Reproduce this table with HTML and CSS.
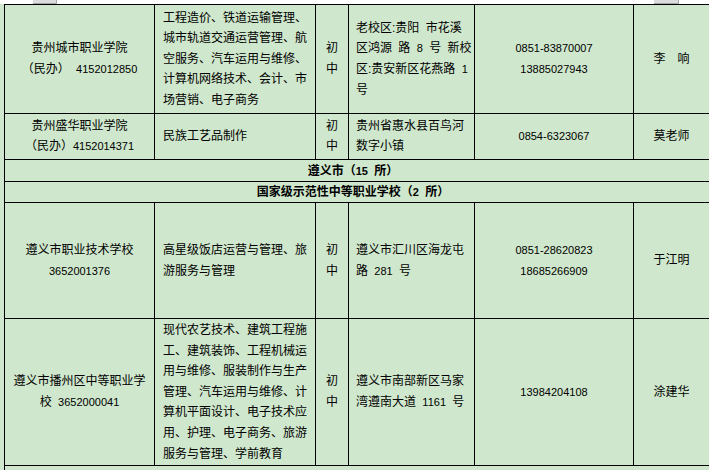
FILE: index.html
```html
<!DOCTYPE html>
<html lang="zh-CN">
<head>
<meta charset="utf-8">
<title>贵州省中等职业学校名录</title>
<link rel="stylesheet" href="styles.css">
</head>
<body>
<div class="ruler"><span class="tab tab-a"></span><span class="tab tab-b"></span></div>
<table class="sheet">
  <colgroup>
    <col class="c1"><col class="c2"><col class="c3"><col class="c4"><col class="c5"><col class="c6">
  </colgroup>
  <tbody>
    <tr class="r1">
      <td class="name">贵州城市职业学院<br>（民办） <span class="n">4152012850</span></td>
      <td class="major">工程造价、铁道运输管理、城市轨道交通运营管理、航空服务、汽车运用与维修、计算机网络技术、会计、市场营销、电子商务</td>
      <td class="level">初中</td>
      <td class="addr">老校区:贵阳 市花溪<br>区鸿源 路 <span class="n">8</span> 号 新校<br>区:贵安新区花燕路 <span class="n">1</span><br>号</td>
      <td class="phone"><span class="n">0851-83870007</span><br><span class="n">13885027943</span></td>
      <td class="contact">李　响</td>
    </tr>
    <tr class="r2">
      <td class="name">贵州盛华职业学院<br>（民办）<span class="n">4152014371</span></td>
      <td class="major">民族工艺品制作</td>
      <td class="level">初中</td>
      <td class="addr">贵州省惠水县百鸟河<br>数字小镇</td>
      <td class="phone"><span class="n">0854-6323067</span></td>
      <td class="contact">莫老师</td>
    </tr>
    <tr class="r3 section">
      <td colspan="6">遵义市（<span class="n">15</span> 所）</td>
    </tr>
    <tr class="r4 section">
      <td colspan="6">国家级示范性中等职业学校（<span class="n">2</span> 所）</td>
    </tr>
    <tr class="r5">
      <td class="name">遵义市职业技术学校<br><span class="n">3652001376</span></td>
      <td class="major">高星级饭店运营与管理、旅游服务与管理</td>
      <td class="level">初中</td>
      <td class="addr">遵义市汇川区海龙屯<br>路 <span class="n">281</span> 号</td>
      <td class="phone"><span class="n">0851-28620823</span><br><span class="n">18685266909</span></td>
      <td class="contact">于江明</td>
    </tr>
    <tr class="r6">
      <td class="name">遵义市播州区中等职业学<br>校 <span class="n">3652000041</span></td>
      <td class="major">现代农艺技术、建筑工程施工、建筑装饰、工程机械运用与维修、服装制作与生产管理、汽车运用与维修、计算机平面设计、电子技术应用、护理、电子商务、旅游服务与管理、学前教育</td>
      <td class="level">初中</td>
      <td class="addr">遵义市南部新区马家<br>湾遵南大道 <span class="n">1161</span> 号</td>
      <td class="phone"><span class="n">13984204108</span></td>
      <td class="contact">涂建华</td>
    </tr>
    <tr class="r7 section">
      <td colspan="6">国家级重点中等职业学校（<span class="n">3</span> 所）</td>
    </tr>
  </tbody>
</table>
</body>
</html>
```
FILE: styles.css
```css
html, body {
  margin: 0;
  padding: 0;
}
body {
  width: 709px;
  height: 470px;
  overflow: hidden;
  background: #cfe7cc;
  color: #000;
  font-family: "Liberation Sans", "Noto Sans CJK SC", sans-serif;
  font-size: 12px;
  word-spacing: 3px;
}
.ruler {
  display: flex;
  height: 4px;
  background: #fff;
}
.tab {
  height: 3px;
  background: #dcdcdc;
  border-bottom: 1px solid #a6a6a6;
  border-right: 1px solid #a6a6a6;
}
.tab-a {
  width: 23px;
  margin-left: 33px;
}
.tab-b {
  width: 24px;
  margin-left: 597px;
}
.sheet {
  margin-left: 4px;
  width: 705px;
  table-layout: fixed;
  border-collapse: collapse;
}
.c1 { width: 150px; }
.c2 { width: 161px; }
.c3 { width: 33px; }
.c4 { width: 126px; }
.c5 { width: 159px; }
.c6 { width: 76px; }
.sheet td {
  border: 1px solid #000;
  padding: 1px 4px 1px 8px;
  line-height: 20.6px;
  vertical-align: middle;
  text-align: left;
}
.sheet td.name {
  padding: 1px 7px;
  text-align: center;
}
.sheet td.level {
  padding: 1px 5px;
  text-align: center;
}
.sheet td.addr {
  padding: 1px 2px 1px 7px;
}
.sheet td.phone,
.sheet td.contact {
  padding: 1px 4px;
  text-align: center;
}
.n {
  font-size: 11px;
}
.r1 { height: 109px; }
.r2 { height: 46px; }
.r2 td { line-height: 19.6px; }
.r3 { height: 22px; }
.r4 { height: 21px; }
.r5 { height: 116px; }
.r6 { height: 146px; }
.r7 { height: 22px; }
.section td {
  padding: 0 8px 0 0;
  text-align: center;
  font-weight: bold;
  line-height: 18px;
}
.sheet .r7 td {
  padding-top: 3px;
  vertical-align: top;
}
```
